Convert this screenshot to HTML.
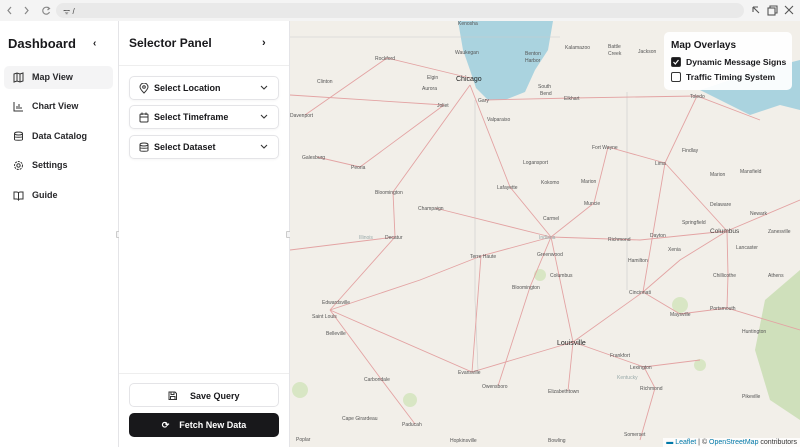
<!DOCTYPE html>
<html><head><meta charset="utf-8"><style>
*{margin:0;padding:0;box-sizing:border-box}
body{width:800px;height:447px;overflow:hidden;font-family:"Liberation Sans",sans-serif;color:#18181b;background:#fff;position:relative}
.bar{position:absolute;left:0;top:0;width:800px;height:21px;background:#f4f4f4}
.url{position:absolute;left:56px;top:3px;width:688px;height:15px;background:#e9e9e9;border-radius:8px;font-size:8px;color:#444;padding:3px 0 0 7px}
.side{position:absolute;left:0;top:21px;width:119px;height:426px;border-right:1px solid #e4e4e7;background:#fff}
.panel{position:absolute;left:119px;top:21px;width:171px;height:426px;border-right:1px solid #e4e4e7;background:#fff}
.t{position:absolute;font-weight:bold;font-size:13px}
.item{position:absolute;left:4px;width:109px;height:23px;border-radius:5px;font-size:9px;font-weight:bold;padding:6px 0 0 28px;color:#27272a}
.item svg{position:absolute;left:9px;top:6px}
.dd{position:absolute;left:10px;width:150px;height:24px;border:1px solid #e4e4e7;border-radius:5px;font-size:9px;font-weight:bold;padding:6px 0 0 24px;box-shadow:0 1px 2px rgba(0,0,0,.04)}
.dd svg.i{position:absolute;left:9px;top:6px}
.dd svg.c{position:absolute;right:10px;top:8px}
.btn{position:absolute;left:10px;width:150px;height:24px;border-radius:5px;font-size:9px;font-weight:bold;text-align:center;padding-top:7px}
.map{position:absolute;left:290px;top:21px;width:510px;height:426px;background:#f2efe9;overflow:hidden}
.ov{position:absolute;left:664px;top:32px;width:128px;height:58px;background:rgba(255,255,255,.93);border-radius:5px}
.cb{position:absolute;left:7px;width:10px;height:10px;border:1px solid #333;border-radius:2px}
.ol{position:absolute;left:22px;font-size:8.6px;font-weight:bold}
</style></head><body>
<div class="bar">
<svg style="position:absolute;left:6px;top:5px" width="50" height="11" fill="none" stroke="#888" stroke-width="1.2"><path d="M5 2 L2 5.5 L5 9"/><path d="M19 2 L22 5.5 L19 9"/><path d="M43 3.5 A3.5 3.5 0 1 0 43.5 7"/><path d="M41.5 2 L43.5 3.5 L41.5 5"/></svg>
<div class="url">ᯤ /</div>
<svg style="position:absolute;left:750px;top:4px" width="45" height="13" fill="none" stroke="#555" stroke-width="1.1"><path d="M3 3 L9 9 M3 3 L3 8 M3 3 L8 3"/><rect x="18" y="4" width="7" height="7"/><path d="M20 4 V2 H27 V9 H25"/><path d="M35 2 L43 10 M43 2 L35 10"/></svg>
</div>
<div class="side">
<div class="t" style="left:8px;top:15px">Dashboard</div>
<div style="position:absolute;left:93px;top:17px;font-size:10px;font-weight:bold">‹</div>
<div class="item" style="top:45px;background:#f4f4f5"><svg width="11" height="11" fill="none" stroke="#333" stroke-width="1"><path d="M1 2 L4 1 L7 2 L10 1 V9 L7 10 L4 9 L1 10Z M4 1V9 M7 2V10"/></svg>Map View</div>
<div class="item" style="top:74px"><svg width="11" height="11" fill="none" stroke="#333" stroke-width="1"><path d="M1 1 V10 H10 M4 8V5 M6 8V3 M8 8V6"/></svg>Chart View</div>
<div class="item" style="top:104px"><svg width="11" height="11" fill="none" stroke="#333" stroke-width="1"><ellipse cx="5.5" cy="2.5" rx="4" ry="1.5"/><path d="M1.5 2.5V8.5C1.5 9.5 9.5 9.5 9.5 8.5V2.5 M1.5 5.5C1.5 6.5 9.5 6.5 9.5 5.5"/></svg>Data Catalog</div>
<div class="item" style="top:133px"><svg width="11" height="11" fill="none" stroke="#333" stroke-width="1"><circle cx="5.5" cy="5.5" r="1.7"/><circle cx="5.5" cy="5.5" r="4" stroke-dasharray="2 1"/></svg>Settings</div>
<div class="item" style="top:163px"><svg width="11" height="11" fill="none" stroke="#333" stroke-width="1"><path d="M1 2 H4 C5 2 5.5 3 5.5 3 C5.5 3 6 2 7 2 H10 V9 H7 C6 9 5.5 10 5.5 10 C5.5 10 5 9 4 9 H1Z M5.5 3V10"/></svg>Guide</div>
<div style="position:absolute;left:116px;top:210px;width:5px;height:7px;border:1px solid #ccc;background:#f4f4f5;border-radius:1px"></div>
</div>
<div class="panel">
<div class="t" style="left:10px;top:15px;font-size:12px">Selector Panel</div>
<div style="position:absolute;left:143px;top:16px;font-size:11px;font-weight:bold">›</div>
<div style="position:absolute;left:0;top:44px;width:170px;border-top:1px solid #eee"></div>
<div class="dd" style="top:55px"><svg class="i" width="10" height="11" fill="none" stroke="#333" stroke-width="1"><path d="M5 10 C2 7 1 5.5 1 4 A4 4 0 0 1 9 4 C9 5.5 8 7 5 10Z"/><circle cx="5" cy="4" r="1.3"/></svg>Select Location<svg class="c" width="8" height="6" fill="none" stroke="#333" stroke-width="1.1"><path d="M1 1 L4 4 L7 1"/></svg></div>
<div class="dd" style="top:84px"><svg class="i" width="10" height="11" fill="none" stroke="#333" stroke-width="1"><rect x="1" y="2" width="8" height="8" rx="1"/><path d="M1 5H9 M3 0.5V3 M7 0.5V3"/></svg>Select Timeframe<svg class="c" width="8" height="6" fill="none" stroke="#333" stroke-width="1.1"><path d="M1 1 L4 4 L7 1"/></svg></div>
<div class="dd" style="top:114px"><svg class="i" width="10" height="11" fill="none" stroke="#333" stroke-width="1"><ellipse cx="5" cy="2.5" rx="4" ry="1.5"/><path d="M1 2.5V8.5C1 9.5 9 9.5 9 8.5V2.5 M1 5.5C1 6.5 9 6.5 9 5.5"/></svg>Select Dataset<svg class="c" width="8" height="6" fill="none" stroke="#333" stroke-width="1.1"><path d="M1 1 L4 4 L7 1"/></svg></div>
<div style="position:absolute;left:0;top:352px;width:170px;border-top:1px solid #eee"></div>
<div class="btn" style="top:362px;border:1px solid #e4e4e7"><svg width="9" height="9" style="vertical-align:-1px" fill="none" stroke="#333" stroke-width="1"><path d="M1 1 H7 L8.5 2.5 V8.5 H1Z M3 1V3.5H6V1 M2.5 8.5V5.5H7V8.5"/></svg>&nbsp;&nbsp;&nbsp;&nbsp;&nbsp;Save Query</div>
<div class="btn" style="top:392px;background:#18181b;color:#fff">⟳&nbsp;&nbsp;&nbsp;&nbsp;Fetch New Data</div>
<div style="position:absolute;left:167px;top:210px;width:5px;height:7px;border:1px solid #ccc;background:#f4f4f5;border-radius:1px"></div>
</div>
<div class="map">
<svg width="510" height="426" viewBox="290 21 510 426" style="position:absolute;left:0;top:0" font-family="Liberation Sans" font-size="5" fill="#555">
<path d="M458 21 L553 21 L548 50 L535 70 L525 92 L505 100 L488 100 L476 88 L470 70 L463 50Z" fill="#aad3df"/>
<path d="M700 90 L730 80 L760 70 L800 60 L800 110 L780 105 L750 115 L720 100Z" fill="#aad3df"/>
<path d="M765 300 L800 270 L800 420 L770 400 L755 350Z" fill="#cfe0bb"/>
<g fill="#d8e6c4"><circle cx="540" cy="275" r="6"/><circle cx="680" cy="305" r="8"/><circle cx="410" cy="400" r="7"/><circle cx="700" cy="365" r="6"/><circle cx="300" cy="390" r="8"/></g>
<g fill="none" stroke="#ccc" stroke-width=".6"><path d="M475 100 V300 L478 370"/><path d="M627 92 V290"/><path d="M290 37 H560"/></g>
<g fill="none" stroke="#e3a3a3" stroke-width=".9">
<path d="M470 85 L510 187 L551 237"/><path d="M551 237 L573 342 L568 391"/><path d="M551 237 L640 240 L727 231"/><path d="M551 237 L481 256 L420 280 L330 310"/><path d="M485 100 L573 98 L697 96 L760 120"/><path d="M573 342 L644 367 L700 360"/><path d="M643 292 L680 260 L727 231"/><path d="M573 342 L643 292"/><path d="M470 85 L393 192 L395 237 L330 310"/><path d="M444 105 L360 167 L317 157"/><path d="M305 115 L387 58 L470 78"/><path d="M608 147 L594 203 L551 237"/><path d="M608 147 L665 163 L727 231"/><path d="M330 310 L381 379 L415 424"/><path d="M330 310 L472 372 L573 342"/><path d="M697 96 L665 163 L643 292"/><path d="M727 231 L800 200"/><path d="M727 231 L728 275 L727 308"/><path d="M435 208 L551 237"/><path d="M644 367 L655 388 L640 440"/><path d="M290 95 L444 105"/><path d="M481 256 L472 372"/><path d="M395 237 L290 250"/><path d="M551 237 L530 287 L498 386"/><path d="M800 330 L727 308 L680 314 L643 292"/></g>
<g>
<text x="458" y="25">Kenosha</text><text x="455" y="54">Waukegan</text><text x="375" y="60">Rockford</text><text x="317" y="83">Clinton</text><text x="427" y="79">Elgin</text><text x="422" y="90">Aurora</text><text x="456" y="81" font-size="7" fill="#222">Chicago</text><text x="478" y="102">Gary</text><text x="437" y="107">Joliet</text><text x="290" y="117">Davenport</text><text x="487" y="121">Valparaiso</text><text x="525" y="55">Benton</text><text x="525" y="62">Harbor</text><text x="565" y="49">Kalamazoo</text><text x="608" y="48">Battle</text><text x="608" y="55">Creek</text><text x="638" y="53">Jackson</text><text x="538" y="88">South</text><text x="540" y="95">Bend</text><text x="564" y="100">Elkhart</text><text x="690" y="98">Toledo</text>
<text x="302" y="159">Galesburg</text><text x="351" y="169">Peoria</text><text x="375" y="194">Bloomington</text><text x="418" y="210">Champaign</text><text x="359" y="239" fill="#9aa">Illinois</text><text x="385" y="239">Decatur</text><text x="470" y="258">Terre Haute</text><text x="497" y="189">Lafayette</text><text x="523" y="164">Logansport</text><text x="541" y="184">Kokomo</text><text x="581" y="183">Marion</text><text x="592" y="149">Fort Wayne</text><text x="584" y="205">Muncie</text><text x="543" y="220">Carmel</text><text x="539" y="239" fill="#9aa">Indiana</text><text x="537" y="256">Greenwood</text><text x="550" y="277">Columbus</text><text x="512" y="289">Bloomington</text><text x="608" y="241">Richmond</text><text x="650" y="237">Dayton</text><text x="682" y="224">Springfield</text><text x="668" y="251">Xenia</text><text x="628" y="262">Hamilton</text><text x="629" y="294">Cincinnati</text><text x="710" y="233" font-size="6.5" fill="#444">Columbus</text><text x="655" y="165">Lima</text><text x="682" y="152">Findlay</text><text x="710" y="176">Marion</text><text x="740" y="173">Mansfield</text><text x="710" y="206">Delaware</text><text x="750" y="215">Newark</text><text x="768" y="233">Zanesville</text><text x="736" y="249">Lancaster</text><text x="713" y="277">Chillicothe</text><text x="768" y="277">Athens</text><text x="710" y="310">Portsmouth</text><text x="670" y="316">Maysville</text><text x="742" y="333">Huntington</text>
<text x="557" y="345" font-size="7" fill="#222">Louisville</text><text x="610" y="357">Frankfort</text><text x="630" y="369">Lexington</text><text x="617" y="379" fill="#9aa">Kentucky</text><text x="640" y="390">Richmond</text><text x="458" y="374">Evansville</text><text x="482" y="388">Owensboro</text><text x="548" y="393">Elizabethtown</text><text x="364" y="381">Carbondale</text><text x="322" y="304">Edwardsville</text><text x="312" y="318">Saint Louis</text><text x="326" y="335">Belleville</text><text x="342" y="420">Cape Girardeau</text><text x="402" y="426">Paducah</text><text x="450" y="442">Hopkinsville</text><text x="548" y="442">Bowling</text><text x="624" y="436">Somerset</text><text x="296" y="441">Poplar</text><text x="742" y="398">Pikeville</text>
</g></svg>
<div style="position:absolute;right:0;bottom:0;background:rgba(255,255,255,.8);font-size:7px;padding:1px 3px;color:#333"><span style="color:#0078a8">▬ Leaflet</span> | © <span style="color:#0078a8">OpenStreetMap</span> contributors</div>
</div>
<div class="ov">
<div style="position:absolute;left:7px;top:8px;font-size:10px;font-weight:bold">Map Overlays</div>
<div class="cb" style="top:25px;background:#18181b"><svg width="8" height="8" style="position:absolute;left:0;top:0" fill="none" stroke="#fff" stroke-width="1.2"><path d="M1.5 4 L3.3 6 L6.5 2"/></svg></div>
<div class="ol" style="top:25px">Dynamic Message Signs</div>
<div class="cb" style="top:40px;background:#fff"></div>
<div class="ol" style="top:40px">Traffic Timing System</div>
</div>
</body></html>
